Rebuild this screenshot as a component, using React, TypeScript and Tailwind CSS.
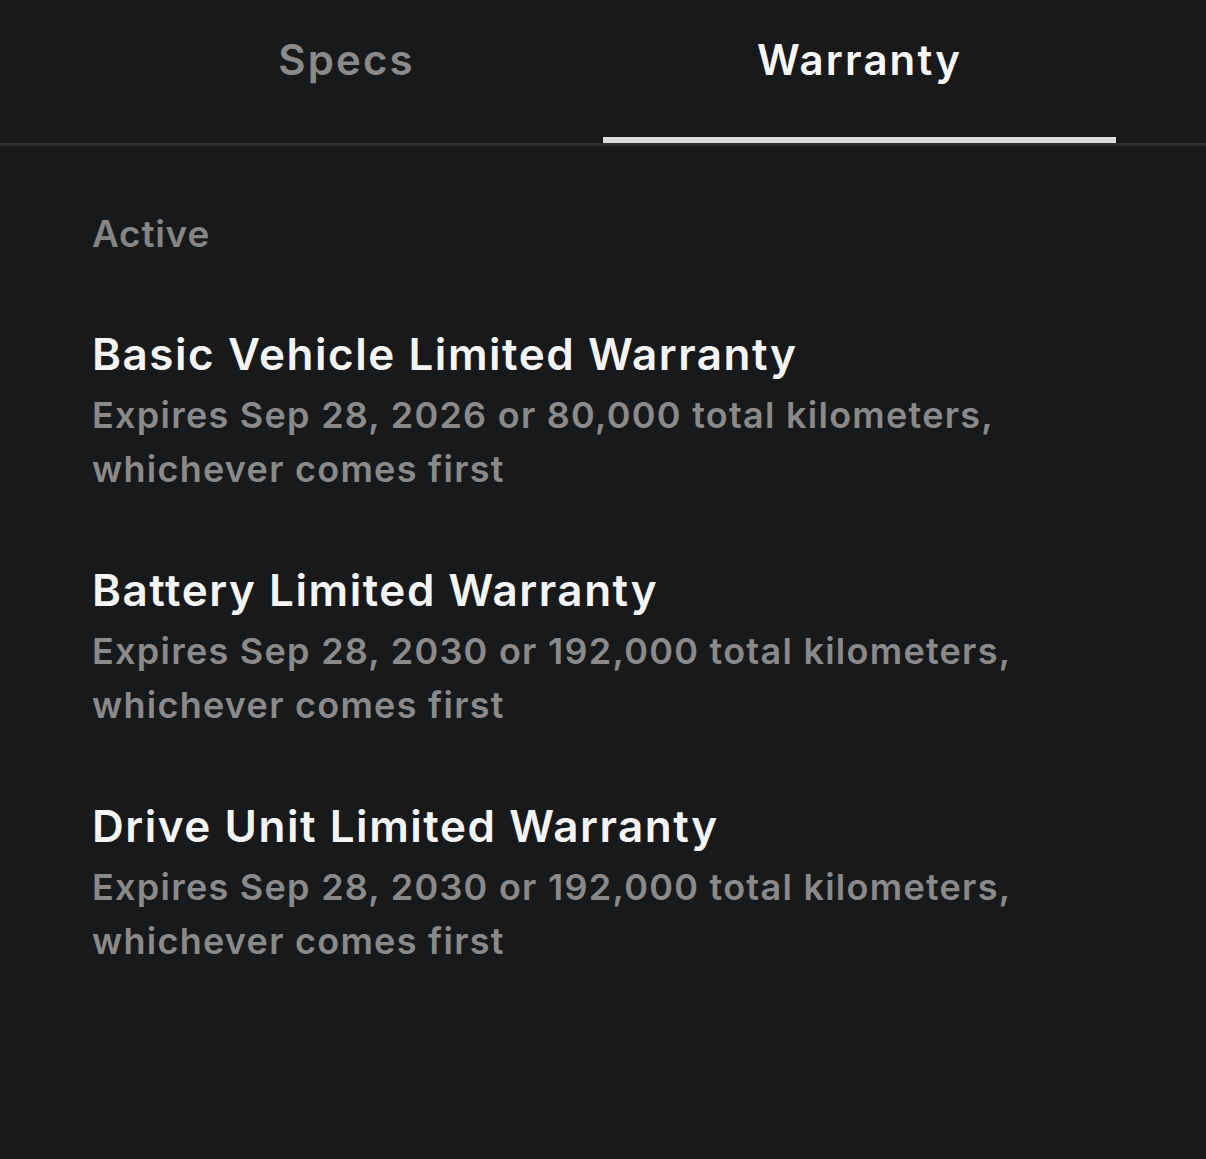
const warranties = [
  {
    title: "Basic Vehicle Limited Warranty",
    detail: "Expires Sep 28, 2026 or 80,000 total kilometers, whichever comes first",
  },
  {
    title: "Battery Limited Warranty",
    detail: "Expires Sep 28, 2030 or 192,000 total kilometers, whichever comes first",
  },
  {
    title: "Drive Unit Limited Warranty",
    detail: "Expires Sep 28, 2030 or 192,000 total kilometers, whichever comes first",
  },
];

const App = () => {
  return (
    <div className="min-h-[1159px] w-[1206px] bg-[#18191b] font-['Inter',sans-serif] antialiased">
      {/* tabs */}
      <div className="flex px-[90px]">
        <div className="flex h-[143px] flex-1 justify-center pt-[30px] text-[42px] font-semibold leading-[60px] tracking-[0.05em] text-[#8a8a8b]">
          Specs
        </div>
        <div className="flex h-[143px] flex-1 flex-col items-center">
          <div className="flex-1 pt-[30px] text-[42px] font-semibold leading-[60px] tracking-[0.05em] text-[#f7f7f7]">
            Warranty
          </div>
          <div className="h-[6px] w-full bg-[#dcdcdc]" />
        </div>
      </div>
      <div className="h-[3px] bg-[#2e2f32]" />

      <div className="px-[92px] pt-[63px]">
        <div className="text-[37px] font-semibold leading-[50px] tracking-[0.02em] text-[#858585]">Active</div>
        <div className="mt-[67px] flex flex-col gap-[66px]">
          {warranties.map((w) => (
            <div key={w.title} className="flex flex-col">
              <p className="text-[44px] font-semibold leading-[56px] tracking-[0.035em] text-[#f5f5f5]">{w.title}</p>
              <p className="mt-[6px] max-w-[1010px] text-[36px] font-semibold leading-[54px] tracking-[0.035em] text-[#8a8a8a]">
                {w.detail}
              </p>
            </div>
          ))}
        </div>
      </div>
    </div>
  );
};

export default App;
